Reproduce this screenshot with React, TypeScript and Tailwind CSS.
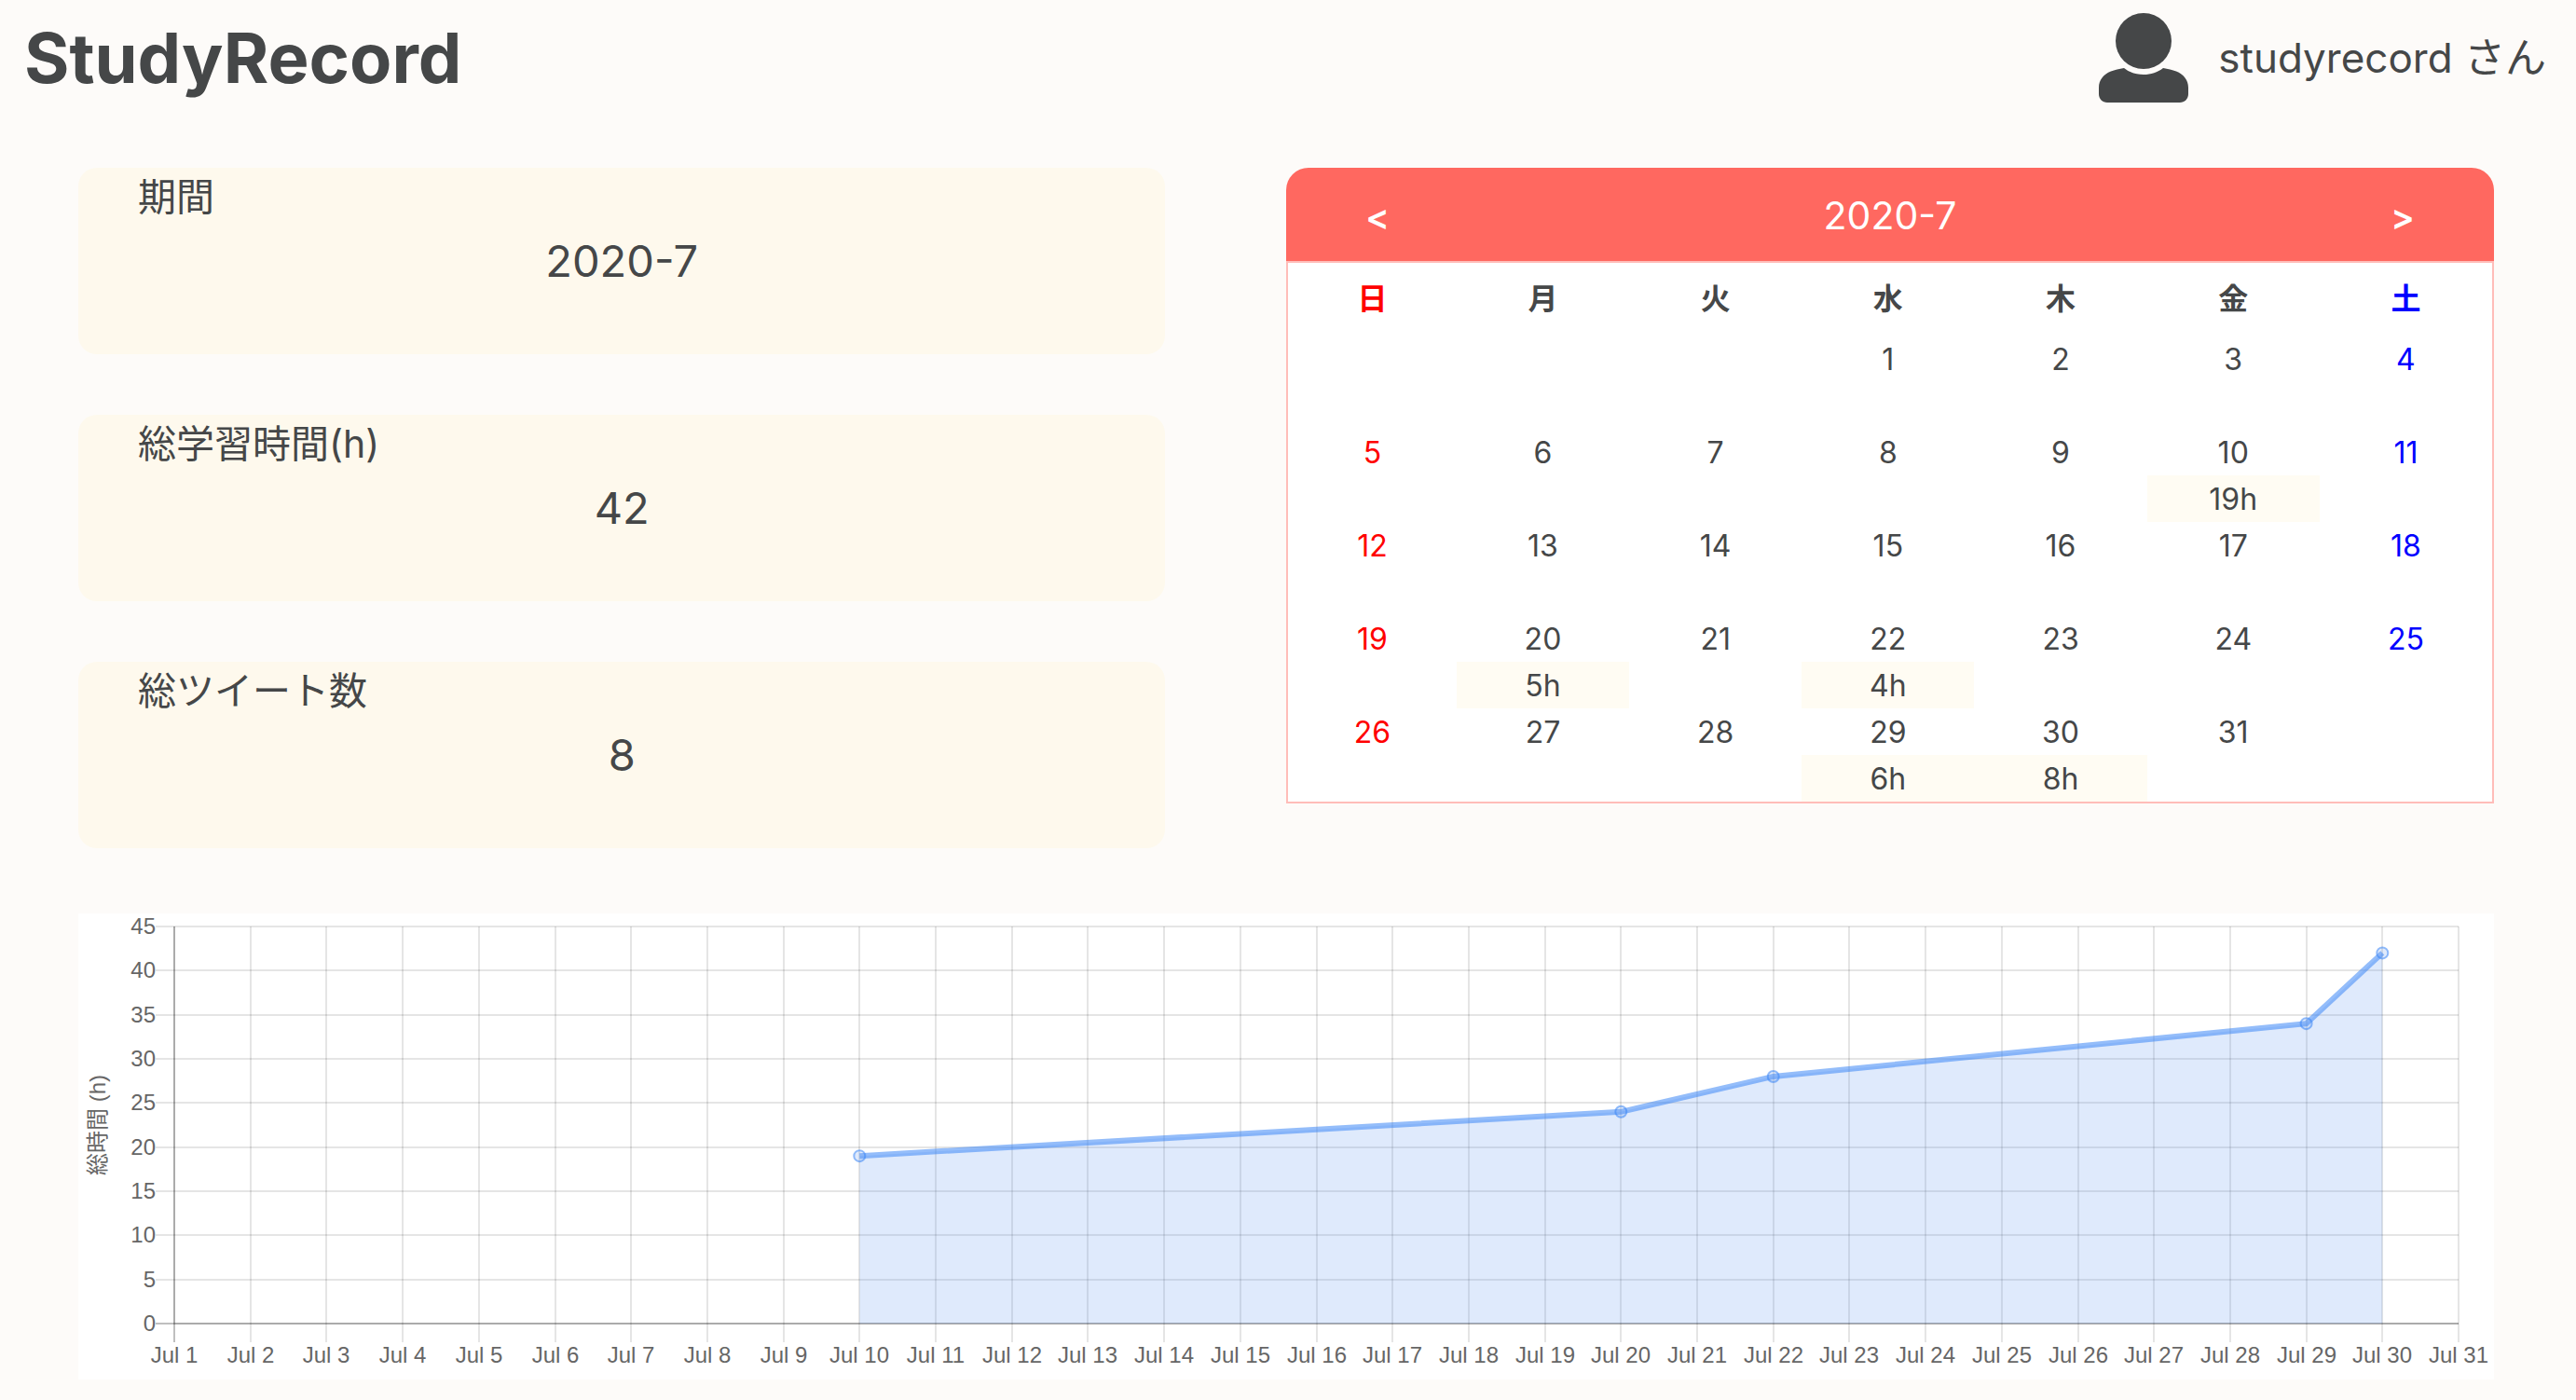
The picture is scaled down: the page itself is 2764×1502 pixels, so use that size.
import { useLayoutEffect, useRef, useState } from "react";

const SUMMARY = [
  { label: "期間", value: "2020-7" },
  { label: "総学習時間(h)", value: "42" },
  { label: "総ツイート数", value: "8" },
];

const WEEKDAYS = ["日", "月", "火", "水", "木", "金", "土"];
const FIRST_WEEKDAY = 3;
const DAYS_IN_MONTH = 31;
const HOURS: Record<number, number> = { 10: 19, 20: 5, 22: 4, 29: 6, 30: 8 };

const WEEKS: (number | null)[][] = Array.from({ length: 5 }, (_, w) =>
  Array.from({ length: 7 }, (_, d) => {
    const day = w * 7 + d - FIRST_WEEKDAY + 1;
    return day >= 1 && day <= DAYS_IN_MONTH ? day : null;
  }),
);

const TOTALS = [
  { day: 10, total: 19 },
  { day: 20, total: 24 },
  { day: 22, total: 28 },
  { day: 29, total: 34 },
  { day: 30, total: 42 },
];

function dayColor(index: number) {
  if (index === 0) return "text-[#ff0000]";
  if (index === 6) return "text-[#0000ff]";
  return "";
}

function UserIcon() {
  return (
    <svg viewBox="0 0 96 96" className="size-24 fill-current" aria-hidden="true">
      <circle cx="48" cy="30" r="30" />
      <path d="M27 59C33 63.700 40 66 48 66C56 66 63 63.700 69 59C74 60 79 61 83 62.500C91 65.500 96 72 96 80V87C96 92 92 96 87 96H9C4 96 0 92 0 87V80C0 72 5 65.500 13 62.500C17 61 22 60 27 59Z" />
    </svg>
  );
}

function SummaryCard({ label, value }: { label: string; value: string }) {
  return (
    <section className="h-[200px] rounded-[20px] bg-[#fef9ed]">
      <h2 className="pl-16 text-[41px] leading-[62px]">{label}</h2>
      <p className="text-center text-[47px] leading-[76px]">{value}</p>
    </section>
  );
}

function Calendar() {
  return (
    <section className="w-1/2">
      <div className="flex h-[100px] items-center justify-between rounded-t-3xl bg-[#ff6860] px-20 pt-1 text-[41px] text-white">
        <button type="button" aria-label="前の月" className="w-9 text-[38px] font-semibold">
          &lt;
        </button>
        <h2>2020-7</h2>
        <button type="button" aria-label="次の月" className="w-9 text-[38px] font-semibold">
          &gt;
        </button>
      </div>
      <div className="border-2 border-[#ffbdb9] bg-white">
        <table className="w-full table-fixed text-center text-[32px]">
          <thead>
            <tr className="h-[78px]">
              {WEEKDAYS.map((name, i) => (
                <th key={name} scope="col" className={`font-bold ${i === 0 ? "w-[14%]" : ""} ${dayColor(i)}`}>
                  {name}
                </th>
              ))}
            </tr>
          </thead>
          <tbody>
            {WEEKS.map((week, w) => (
              <tr key={w}>
                {week.map((day, i) => (
                  <td key={i} className="p-0 leading-[52px]">
                    <div className={`h-[50px] ${dayColor(i)}`}>{day}</div>
                    {day !== null && HOURS[day] ? (
                      <div className="h-[50px] bg-[#fffcf3]">{HOURS[day]}h</div>
                    ) : (
                      <div className="h-[50px]" />
                    )}
                  </td>
                ))}
              </tr>
            ))}
          </tbody>
        </table>
      </div>
    </section>
  );
}

function TotalChart() {
  const ref = useRef<HTMLDivElement>(null);
  const [width, setWidth] = useState(2592);

  useLayoutEffect(() => {
    const el = ref.current;
    if (!el) return;
    const update = () => setWidth(el.clientWidth);
    update();
    const observer = new ResizeObserver(update);
    observer.observe(el);
    return () => observer.disconnect();
  }, []);

  const left = 103;
  const right = width - 38;
  const top = 14;
  const bottom = 440;
  const x = (day: number) => left + ((right - left) * (day - 1)) / 30;
  const y = (hours: number) => bottom - ((bottom - top) * hours) / 45;
  const days = Array.from({ length: DAYS_IN_MONTH }, (_, i) => i + 1);
  const ticks = Array.from({ length: 10 }, (_, i) => i * 5);
  const line = TOTALS.map((p) => `${x(p.day)},${y(p.total)}`).join(" ");

  return (
    <div ref={ref} className="h-[500px] bg-white">
      <svg
        width={width}
        height={500}
        role="img"
        aria-label="総時間 (h)"
        className="block font-['Liberation_Sans','Noto_Sans_CJK_JP',sans-serif] text-[24px]"
      >
        {days.map((d) => (
          <line
            key={d}
            x1={Math.round(x(d))}
            x2={Math.round(x(d))}
            y1={top}
            y2={bottom + 20}
            stroke={d === 1 ? "#00000040" : "#0000001a"}
            strokeWidth={2}
          />
        ))}
        {ticks.map((t) => (
          <line
            key={t}
            x1={left - 20}
            x2={right}
            y1={Math.round(y(t))}
            y2={Math.round(y(t))}
            stroke={t === 0 ? "#00000040" : "#0000001a"}
            strokeWidth={2}
          />
        ))}
        <path d={`M${left} ${top}V${bottom}H${right}`} fill="none" stroke="#0000001a" strokeWidth={2} />
        <polygon points={`${x(10)},${bottom} ${line} ${x(30)},${bottom}`} fill="#5f95f033" />
        <polyline points={line} fill="none" stroke="#3c86f58c" strokeWidth={6} />
        {TOTALS.map((p) => (
          <circle
            key={p.day}
            cx={x(p.day)}
            cy={y(p.total)}
            r={6}
            fill="#5f95f033"
            stroke="#3c86f58c"
            strokeWidth={2}
          />
        ))}
        <g fill="#666666">
          {ticks.map((t) => (
            <text key={t} x={left - 20} y={Math.round(y(t)) + 8} textAnchor="end">
              {t}
            </text>
          ))}
          {days.map((d) => (
            <text key={d} x={Math.round(x(d))} y={bottom + 42} textAnchor="middle">
              Jul {d}
            </text>
          ))}
          <text transform={`translate(29 ${(top + bottom) / 2}) rotate(-90)`} textAnchor="middle">
            総時間 (h)
          </text>
        </g>
      </svg>
    </div>
  );
}

export default function App() {
  return (
    <div className="min-h-screen bg-[#fdfbf9] font-['Inter','Noto_Sans_CJK_JP',sans-serif] text-[#454748]">
      <header className="flex h-[124px] items-center justify-between pr-8 pl-[26px]">
        <h1 className="text-[74px] font-bold">StudyRecord</h1>
        <div className="flex items-center gap-8">
          <UserIcon />
          <p className="text-[44px]">studyrecord さん</p>
        </div>
      </header>
      <main className="pt-14 pr-[88px] pl-[84px]">
        <div className="flex justify-between pb-[70px]">
          <div className="flex w-[45%] flex-col gap-[65px]">
            {SUMMARY.map((item) => (
              <SummaryCard key={item.label} label={item.label} value={item.value} />
            ))}
          </div>
          <Calendar />
        </div>
        <TotalChart />
      </main>
    </div>
  );
}
